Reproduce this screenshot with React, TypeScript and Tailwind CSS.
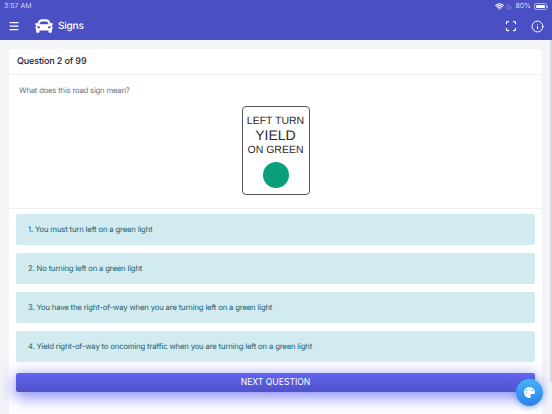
import { FaCar, FaPalette } from 'react-icons/fa';
import { Info, Menu, Moon, Scan, Wifi } from 'lucide-react';

const answers = [
  '1. You must turn left on a green light',
  '2. No turning left on a green light',
  '3. You have the right-of-way when you are turning left on a green light',
  '4. Yield right-of-way to oncoming traffic when you are turning left on a green light'
];

function StatusBar() {
  return (
    <div className="flex h-[12px] items-center justify-between px-[4px] pt-px text-[7px] text-[#d5d6f1]">
      <span>3:57 AM</span>
      <div className="flex items-center gap-[2px]">
        <Wifi size={9} strokeWidth={3} className="text-white" />
        <Moon size={6} className="text-[#9fa2e0]" />
        <span className="ml-px">80%</span>
        <div className="ml-px flex items-center">
          <div className="h-[7px] w-[13px] rounded-[2px] border border-[#a9ace6] p-px">
            <div className="h-full w-[9px] rounded-[1px] bg-white" />
          </div>
          <div className="h-[2px] w-px bg-[#a9ace6]" />
        </div>
      </div>
    </div>
  );
}

function Header() {
  return (
    <header className="h-[40px] bg-[#4a50c4] text-white">
      <StatusBar />
      <div className="flex h-[28px] items-center justify-between px-[8px]">
        <div className="flex items-center">
          <Menu size={12} strokeWidth={2.5} className="mb-px" />
          <FaCar size={18} className="ml-[15px]" />
          <span className="ml-[5px] text-[10px] font-medium tracking-[-0.02em]">Signs</span>
        </div>
        <div className="flex items-center gap-[14px]">
          <Scan size={12} strokeWidth={2.5} />
          <Info size={13} strokeWidth={1.8} />
        </div>
      </div>
    </header>
  );
}

function RoadSign() {
  return (
    <div className="flex h-[89px] w-[68px] flex-col items-center rounded-[4px] border border-[#555] bg-white pt-[8px] font-['Liberation_Sans',sans-serif] text-[#2a2a2a]">
      <span className="text-[10.5px] leading-[12px]">LEFT TURN</span>
      <span className="mt-px text-[14px] leading-[15px]">YIELD</span>
      <span className="text-[10.5px] leading-[14px]">ON GREEN</span>
      <div className="mt-[5px] h-[26px] w-[26px] rounded-full bg-[#0b9e7c]" />
    </div>
  );
}

export default function App() {
  return (
    <div className="relative h-[414px] w-[552px] overflow-hidden bg-[#f3f4f7] font-['Inter',sans-serif] [text-rendering:geometricPrecision]">
      <Header />
      <main className="ml-[9px] mr-[10px] mt-[9px] rounded-t-[4px] bg-white">
        <div className="flex h-[26px] items-center border-b border-[#f0f0f3] px-[8px] text-[9px] font-medium tracking-[-0.015em] text-[#20242c]">
          Question 2 of 99
        </div>
        <p className="pb-[9px] pl-[10px] pt-[10px] text-[7.7px] leading-[12px] tracking-[-0.025em] text-[#6c7280]">What does this road sign mean?</p>
        <div className="flex justify-center border-b border-[#f0f0f3] pb-[13px]">
          <RoadSign />
        </div>
        <div className="flex flex-col gap-[8px] px-[7px] pt-[5px]">
          {answers.map((answer) => (
            <div key={answer} className="flex h-[31px] items-center rounded-[2px] bg-[#d1ebf0] px-[12px] text-[7.7px] tracking-[-0.02em] text-[#1d5c6a]">
              {answer}
            </div>
          ))}
        </div>
        <div className="px-[7px] pb-[30px] pt-[11px]">
          <button className="flex h-[19px] w-full items-center justify-center rounded-[2px] bg-gradient-to-b from-[#6266f1] to-[#4f52c8] text-[8.6px] text-white shadow-[0_4px_16px_1px_rgba(99,102,241,0.8)]">
            NEXT QUESTION
          </button>
        </div>
      </main>
      <div className="absolute right-0 top-[40px] h-[342px] w-[2px] bg-[#d8d9dd]" />
      <button className="absolute left-[516px] top-[379px] flex h-[27px] w-[27px] items-center justify-center rounded-full bg-gradient-to-b from-[#45b5f5] to-[#2f80ed] text-white shadow-[0_1px_6px_rgba(47,128,237,0.6)]">
        <FaPalette size={11} />
      </button>
    </div>
  );
}
